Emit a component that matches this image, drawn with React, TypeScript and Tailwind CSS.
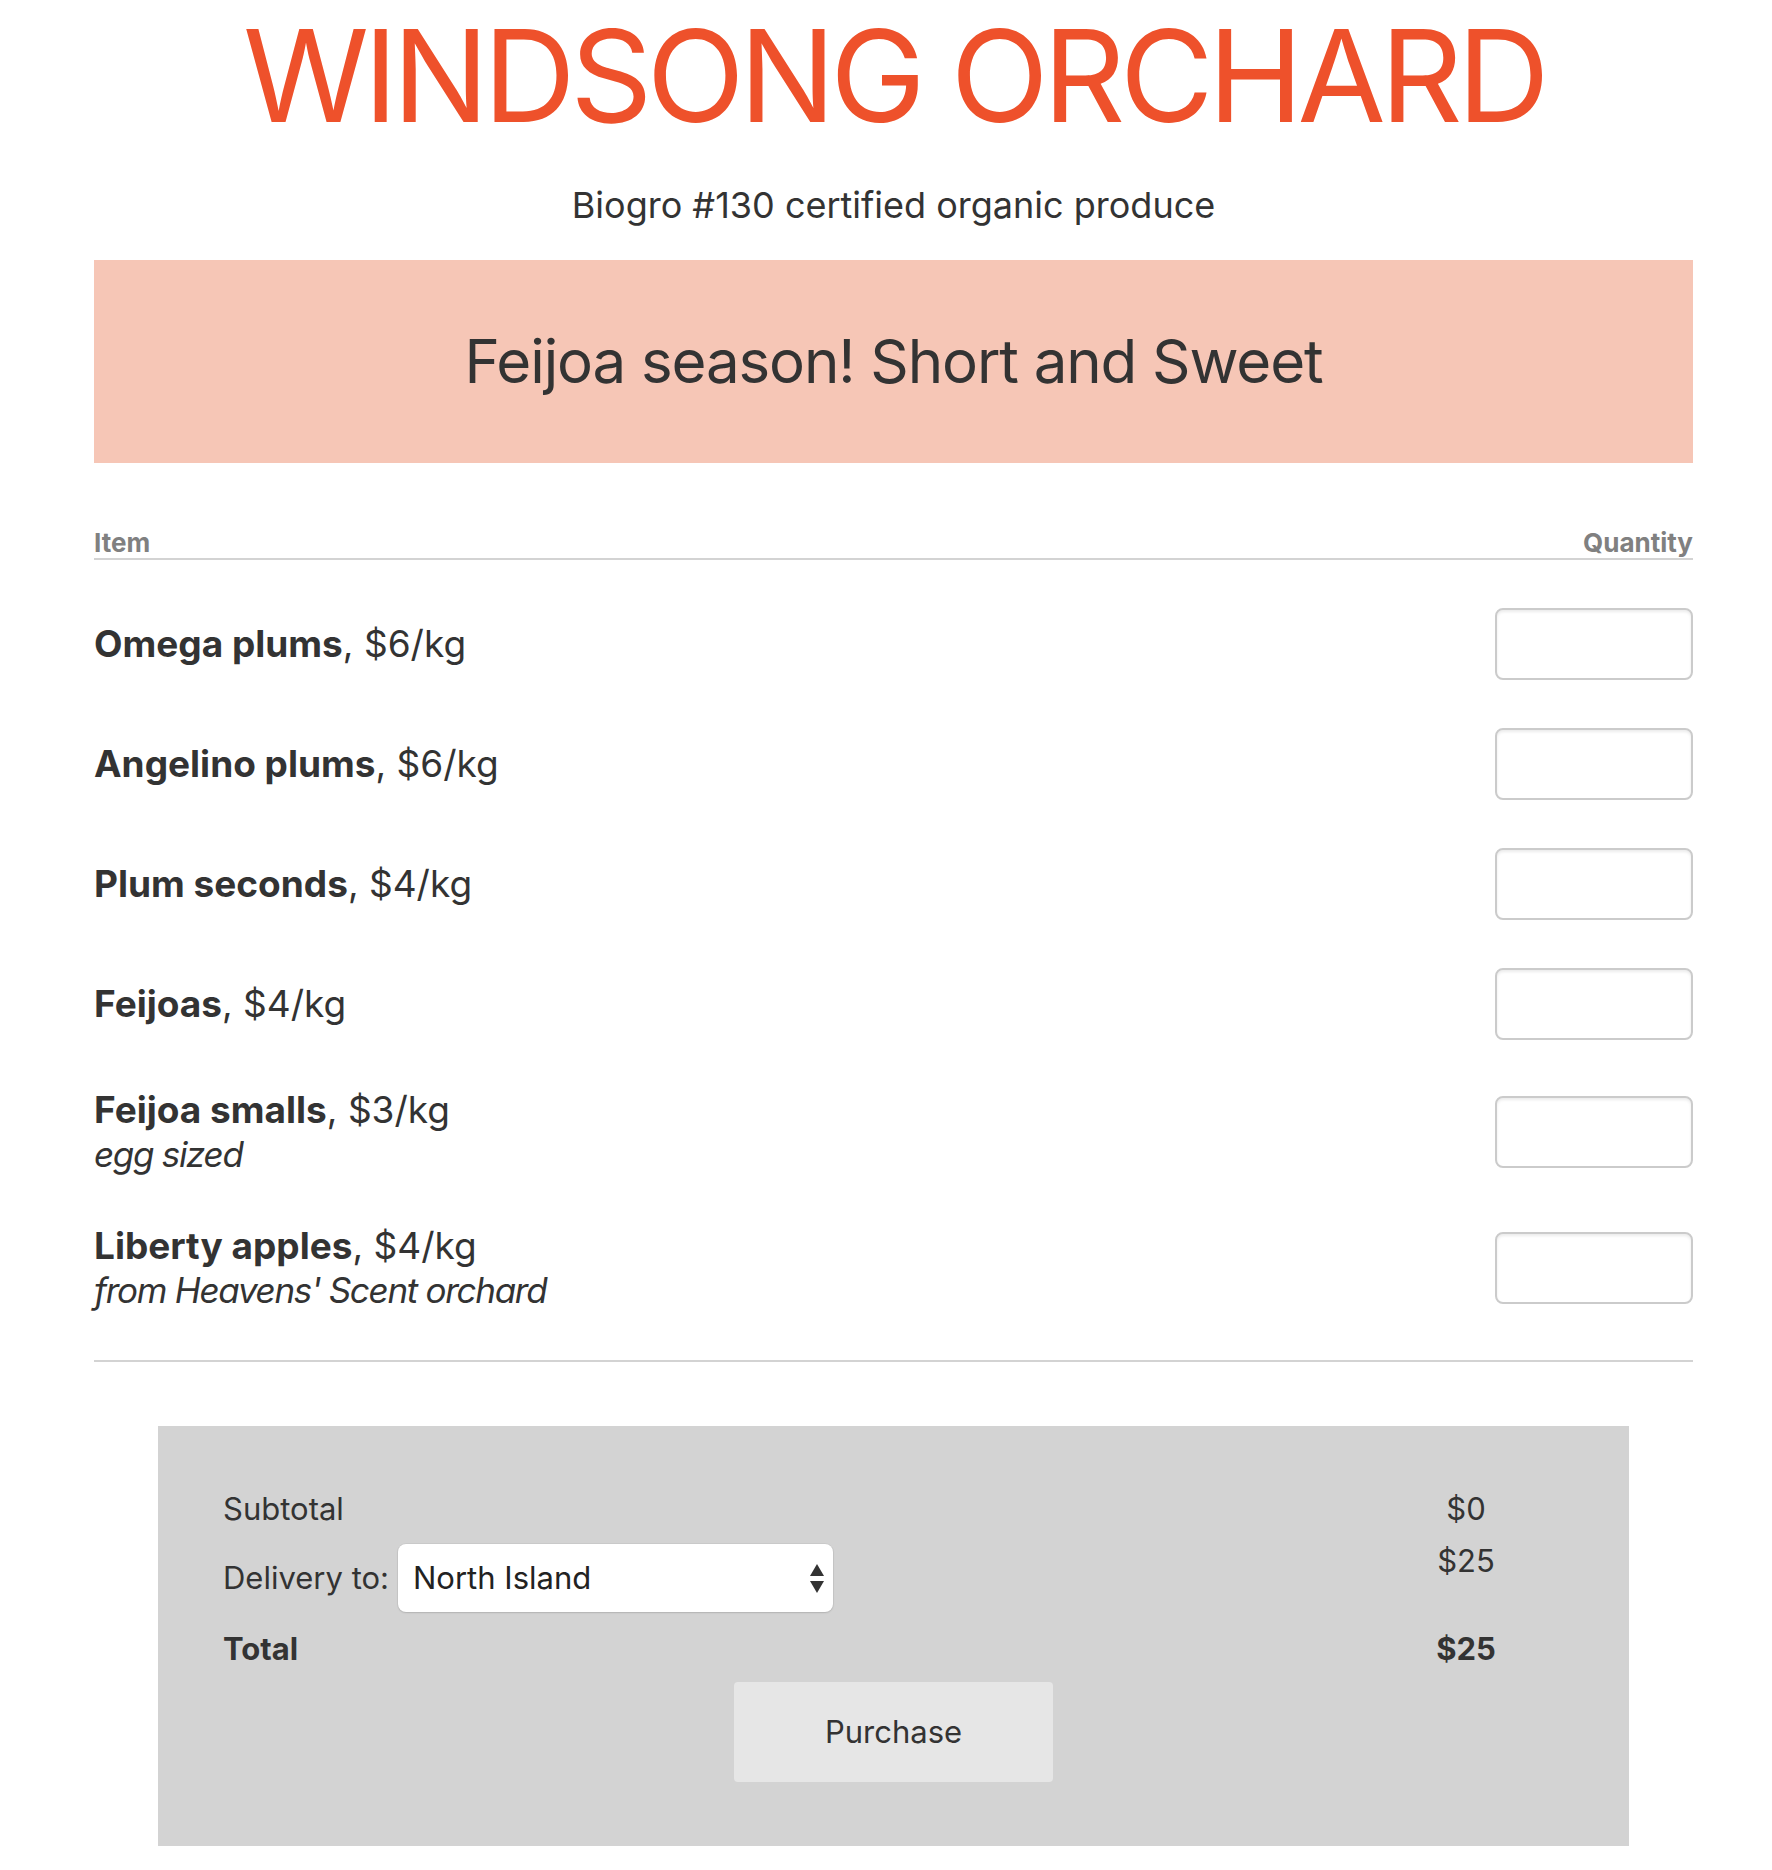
import React from "react";

const items = [
  { name: "Omega plums", price: "$6/kg" },
  { name: "Angelino plums", price: "$6/kg" },
  { name: "Plum seconds", price: "$4/kg" },
  { name: "Feijoas", price: "$4/kg" },
  { name: "Feijoa smalls", price: "$3/kg", note: "egg sized" },
  { name: "Liberty apples", price: "$4/kg", note: "from Heavens' Scent orchard" },
];

export default function App() {
  return (
    <div className="min-h-[1870px] bg-white text-[#333333] font-['Inter','Noto_Sans',sans-serif] pl-[94px] pr-[79px]">
      <h1 className="pt-[12px] text-center text-[128px] leading-[128px] font-normal tracking-[-5.5px] text-[#ee512b]">
        WINDSONG ORCHARD
      </h1>
      <p className="mt-[44px] text-center text-[36px] leading-[43px]">
        Biogro #130 certified organic produce
      </p>
      <div className="mt-[33px] flex h-[203px] items-center justify-center bg-[#f6c6b6] text-[60px] leading-[75px] tracking-[-1.1px]">
        Feijoa season! Short and Sweet
      </div>

      <div className="mt-[64px] flex justify-between border-b-2 border-[#d3d3d3] text-[26px] font-bold leading-[31px] text-[#808080]">
        <span>Item</span>
        <span>Quantity</span>
      </div>

      <div className="border-b-2 border-[#d3d3d3] py-[24px]">
        {items.map((it) => (
          <div key={it.name} className="flex items-center justify-between py-[24px]">
            <div className="flex flex-col text-[37px] leading-[44px]">
              <span>
                <span className="font-bold">{it.name}</span>, {it.price}
              </span>
              {it.note && (
                <span className="text-[35px] italic tracking-[-1.3px]">{it.note}</span>
              )}
            </div>
            <input
              type="text"
              className="h-[72px] w-[198px] rounded-[8px] border-2 border-[#cbcbcb] bg-white shadow-[inset_0_2px_3px_rgba(0,0,0,0.08)] outline-none"
            />
          </div>
        ))}
      </div>

      <div className="mx-[64px] mt-[64px] bg-[#d3d3d3] px-[65px] pt-[64px] pb-[64px] text-[31px] leading-[38px]">
        <div className="grid grid-cols-[1fr_196px]">
          <div>Subtotal</div>
          <div className="text-center">$0</div>
        </div>
        <div className="mt-[14px] grid grid-cols-[1fr_196px]">
          <div className="flex h-[72px] items-center gap-[9px] pt-[0px]">
            <span>Delivery to:</span>
            <div className="relative">
              <select
                defaultValue="North Island"
                className="h-[68px] w-[435px] appearance-none rounded-[8px] bg-white pl-[15px] text-[31px] text-[#222] shadow-[0_0_0_1px_rgba(0,0,0,0.04),0_1px_2px_rgba(0,0,0,0.12)] outline-none"
              >
                <option>North Island</option>
                <option>South Island</option>
              </select>
              <svg
                className="pointer-events-none absolute right-[9px] top-[20px]"
                width="14"
                height="30"
                viewBox="0 0 14 30"
              >
                <polygon points="7,0 14,12 0,12" fill="#333" />
                <polygon points="0,17 14,17 7,29" fill="#333" />
              </svg>
            </div>
          </div>
          <div className="text-center">$25</div>
        </div>
        <div className="mt-[16px] grid grid-cols-[1fr_196px] font-bold">
          <div>Total</div>
          <div className="text-center">$25</div>
        </div>
        <button className="mx-auto mt-[14px] block h-[100px] w-[319px] rounded-[4px] bg-[#e6e6e6] text-[31px] text-[#333]">
          Purchase
        </button>
      </div>
    </div>
  );
}
